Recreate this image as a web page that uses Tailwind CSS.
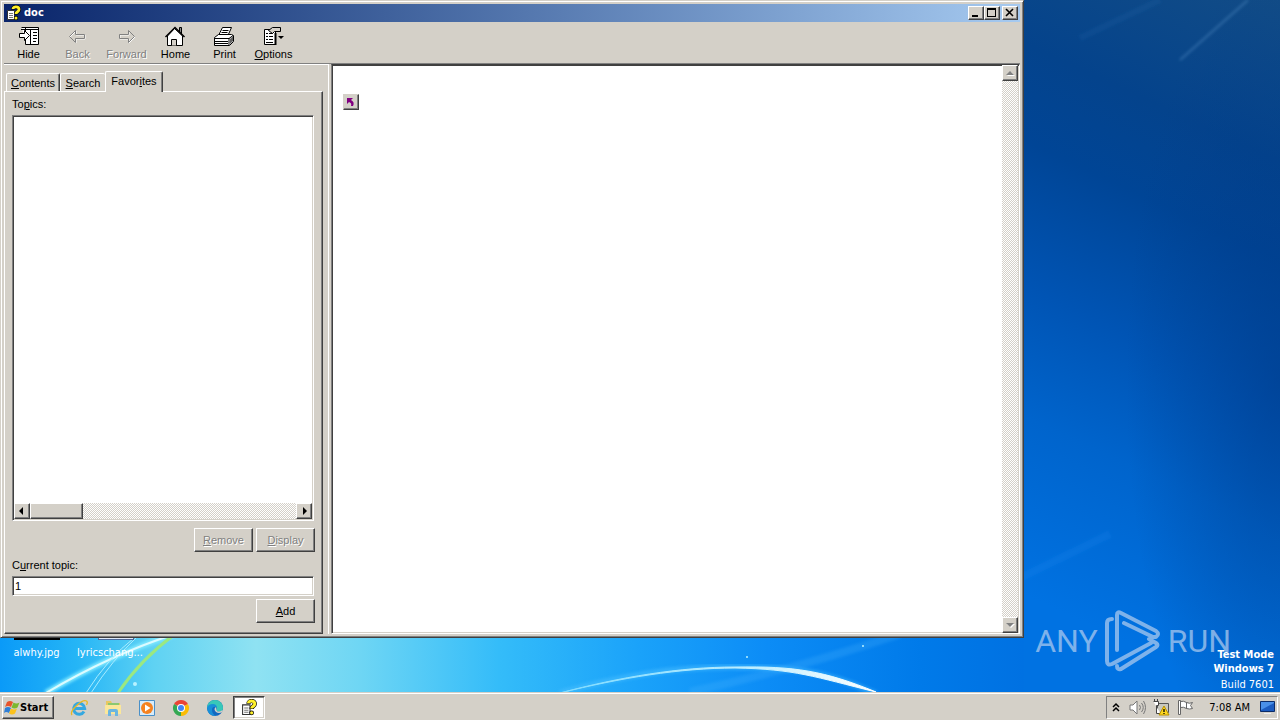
<!DOCTYPE html>
<html lang="en">
<head>
  <meta charset="UTF-8"/>
  <meta name="viewport" content="width=device-width, initial-scale=1.0"/>
  <title>doc</title>
  <script src="https://cdn.jsdelivr.net/npm/@tailwindcss/browser@4"></script>
</head>
<body class="flex h-screen flex-col overflow-hidden bg-[#0070e0] font-['Liberation_Sans',Arial,sans-serif] text-[11px] leading-[14px] text-black">

  <!-- Shared symbols -->
  <svg class="hidden">
    <symbol id="help" viewBox="0 0 16 16">
      <path d="M1.500 5.500h7v9h-7z" fill="#fff" stroke="#333"/>
      <path d="M3 8.500h4M3 10.500h4M3 12.500h4" stroke="#777"/>
      <path d="M7 4.500C7 1 13 1 13 4.500c0 2.500-3 2-3 5" fill="none" stroke="#000" stroke-width="4"/>
      <circle cx="10" cy="13" r="2.200" fill="#000"/>
      <path d="M7 4C7 1 13 1 13 4.500c0 2.500-3 2-3 4.500" fill="none" stroke="#fff02a" stroke-width="2.800"/>
      <circle cx="10" cy="13" r="1.500" fill="#fff02a"/>
    </symbol>
  </svg>

  <main class="relative min-h-0 flex-1 bg-[linear-gradient(90deg,#0a9af8_0%,#25b5f6_6%,#5fd2f3_12%,#8fe2f2_20%,#6fd6f4_28%,#34bcf9_39%,#1aa2fa_50%,#0c8cf6_60%,#007ae9_72%,#0070e1_81%,#0066d2_90%,#0050b0_100%)]">

    <!-- Wallpaper -->
    <div class="absolute inset-y-0 right-0 w-[20%] bg-[linear-gradient(205deg,#124c86_0%,#04438c_20%,#004596_32%,#0054b4_50%,#0064cc_66%,#0072e2_88%)]"></div>
    <svg class="absolute inset-0 size-full" viewBox="0 0 1280 692" preserveAspectRatio="xMidYMax slice" fill="none">
      <defs>
        <filter id="soft"><feGaussianBlur stdDeviation="1.500"/></filter>
        <radialGradient id="edge" cx="1" cy=".55" r=".6">
          <stop offset="0" stop-color="#003a88" stop-opacity=".55"/>
          <stop offset="1" stop-color="#003a88" stop-opacity="0"/>
        </radialGradient>
        <linearGradient id="arc" x1="560" y1="0" x2="880" y2="0" gradientUnits="userSpaceOnUse">
          <stop offset="0" stop-color="#7fdcff"/>
          <stop offset=".6" stop-color="#bfeeff"/>
          <stop offset="1" stop-color="#fff"/>
        </linearGradient>
      </defs>
      <path d="M1023 0h257v692h-257z" fill="url(#edge)"/>
      <path d="M1180 60 1248 0" stroke="#5f9ad0" stroke-opacity=".4" stroke-width="2" filter="url(#soft)"/>
      <path d="M1080 38 1160 0" stroke="#3a7cc0" stroke-opacity=".12" stroke-width="6" filter="url(#soft)"/>
      <path d="M1020 578 1110 534" stroke="#2f97f5" stroke-opacity=".14" stroke-width="8" filter="url(#soft)"/>
      <path d="M690 692Q800 668 900 634" stroke="#5cc0ff" stroke-opacity=".2" stroke-width="8" filter="url(#soft)"/>
      <path d="M46 693Q110 655 175 634" stroke="#7fe8ff" stroke-width="6" filter="url(#soft)"/>
      <path d="M46 693Q110 655 175 634" stroke="#dcfbff" stroke-width="2"/>
      <path d="M86 693Q108 658 134 638M91 693Q112 660 138 636" stroke="#a8ecff" stroke-width="1"/>
      <path d="M118 693Q140 660 175 634" stroke="#9be880" stroke-width="3"/>
      <path d="M560 693Q650 667 730 667C790 667 825 670 876 694" stroke="#4cc0ff" stroke-width="6" stroke-opacity=".5" filter="url(#soft)"/>
      <path d="M560 693C620 677 680 667 735 667 795 666 825 671 876 692 815 677 795 669 735 668 680 668 620 678 560 693Z" fill="url(#arc)" stroke="url(#arc)"/>
      <g fill="#b8f2ff"><circle cx="135" cy="684" r="2"/><circle cx="747" cy="657" r="1"/><circle cx="863" cy="646" r="1"/></g>
    </svg>

    <!-- Watermark -->
    <div class="absolute right-[49px] bottom-[20px] flex items-center gap-[7px] font-[Roboto,sans-serif] text-[32px] leading-[28px] text-[#a8c8ee]/75">
      <span>ANY</span>
      <svg class="h-[62px] w-[56px]" viewBox="0 0 56 62" fill="none" stroke="currentColor" stroke-width="4" stroke-linejoin="round" stroke-linecap="round">
        <path d="M7 9q-5 0-5 4v38q0 5 5 3l39-21M12 40V5q0-4 4-2l35 18q4 3 0 6h-3L19 13M44 29l7 4q3 2 0 4L16 59q-4 1-4-3"/>
      </svg>
      <span>RUN</span>
    </div>
    <div class="absolute right-[6px] bottom-0 text-right font-['DejaVu_Sans_Condensed','DejaVu_Sans',sans-serif] text-white">
      <p class="font-bold">Test Mode</p>
      <p class="font-bold">Windows 7</p>
      <p class="pt-[2px]">Build 7601</p>
    </div>

    <!-- Desktop icons -->
    <div class="absolute bottom-[32px] left-0 flex font-['DejaVu_Sans_Condensed','DejaVu_Sans',sans-serif] text-white">
      <div class="flex w-[73px] flex-col items-center">
        <div class="mb-[6px] h-[32px] w-[46px] bg-black"></div>
        <span>alwhy.jpg</span>
      </div>
      <div class="flex w-[74px] flex-col items-center">
        <div class="mb-[6px] ml-3 h-[32px] w-[36px] border border-[#4b6a9c] bg-[#dce8f8]"></div>
        <span>lyricschang...</span>
      </div>
    </div>

    <!-- Help viewer window -->
    <section class="absolute top-0 right-[256px] bottom-[54px] left-0 flex flex-col border border-t-[#d4d0c8] border-r-[#404040] border-b-[#404040] border-l-[#d4d0c8] bg-[#d4d0c8] p-[3px] shadow-[inset_1px_1px_0_#fff,inset_-1px_-1px_0_#808080]">
      <header class="flex h-[18px] shrink-0 items-center bg-linear-to-r from-[#0a246a] to-[#a6caf0] pr-[2px] pl-[2px]">
        <svg class="size-[16px]"><use href="#help"/></svg>
        <h1 class="ml-[2px] flex-1 font-['DejaVu_Sans_Condensed','DejaVu_Sans',sans-serif] font-bold text-white">doc</h1>
        <button aria-label="Minimize" class="h-[14px] w-[16px] border border-t-white border-r-[#404040] border-b-[#404040] border-l-white bg-[#d4d0c8] shadow-[inset_-1px_-1px_0_#808080]">
          <svg class="block h-[12px] w-[14px]"><path d="M3 8h6v2H3z"/></svg>
        </button>
        <button aria-label="Maximize" class="h-[14px] w-[16px] border border-t-white border-r-[#404040] border-b-[#404040] border-l-white bg-[#d4d0c8] shadow-[inset_-1px_-1px_0_#808080]">
          <svg class="block h-[12px] w-[14px]"><path d="M2 1h9v9H2zM3 3v6h7V3z" fill-rule="evenodd"/></svg>
        </button>
        <button aria-label="Close" class="ml-[2px] h-[14px] w-[16px] border border-t-white border-r-[#404040] border-b-[#404040] border-l-white bg-[#d4d0c8] shadow-[inset_-1px_-1px_0_#808080]">
          <svg class="block h-[12px] w-[14px]"><path d="m3 2 7 7M10 2 3 9" stroke="#000" stroke-width="1.600"/></svg>
        </button>
      </header>

      <nav class="flex h-[42px] shrink-0 border-b border-[#808080] pt-[4px]">
        <button class="flex w-[49px] flex-col items-center">
          <svg class="h-[21px] w-[24px]" viewBox="0 0 24 21">
            <path d="M4.500 1.500h17v17h-13v-5" fill="#fff" stroke="#000"/>
            <path d="M4 3.500h18M13.500 4v15M8.500 1v4" stroke="#000"/>
            <path d="M16 6.500h4M16 9.500h4M16 12.500h4M16 15.500h3" stroke="#000"/>
            <path d="M2.500 7.500h5v-3l5 5-5 5v-3h-5z" fill="#fff" stroke="#000"/>
          </svg>
          <span>Hide</span>
        </button>
        <button disabled class="flex w-[49px] flex-col items-center text-[#808080] [text-shadow:1px_1px_0_#fff]">
          <svg class="h-[21px] w-[24px]" viewBox="0 0 24 21" fill="none">
            <path d="M4 11l6-6v4h9v4h-9v4z" stroke="#fff"/>
            <path d="M3.500 10.500l6-6v4h9v4h-9v4z" stroke="#808080"/>
          </svg>
          <span>Back</span>
        </button>
        <button disabled class="flex w-[49px] flex-col items-center text-[#808080] [text-shadow:1px_1px_0_#fff]">
          <svg class="h-[21px] w-[24px]" viewBox="0 0 24 21" fill="none">
            <path d="M20 11l-6-6v4H5v4h9v4z" stroke="#fff"/>
            <path d="M19.500 10.500l-6-6v4h-9v4h9v4z" stroke="#808080"/>
          </svg>
          <span>Forward</span>
        </button>
        <button class="flex w-[49px] flex-col items-center">
          <svg class="h-[21px] w-[24px]" viewBox="0 0 24 21">
            <path d="M15.500 6V1.500h2V9" fill="#888" stroke="#000"/>
            <path d="M3.500 10v9.500h15V10l-8-7.500z" fill="#fff" stroke="#000"/>
            <path d="M1.500 11l9.500-9.500 9.500 9.500" fill="none" stroke="#000" stroke-width="1.500"/>
            <path d="M7.500 19.500v-6h5v6" fill="#d4d0c8" stroke="#000"/>
          </svg>
          <span>Home</span>
        </button>
        <button class="flex w-[49px] flex-col items-center">
          <svg class="h-[21px] w-[24px]" viewBox="0 0 24 21">
            <path d="M5.500 9.500l4-8h9l-4 9" fill="#fff" stroke="#000"/>
            <path d="M9.500 4.500h6M8.500 6.500h6M7.500 8.500h6" stroke="#000"/>
            <path d="M1.500 11.500l4-3h13l2 1v6l-4 4h-15z" fill="#fff" stroke="#000"/>
            <path d="M1 12.500h15l4-3M16 12v7" fill="none" stroke="#000"/>
            <path d="M2 15.500h13M2 17.500h13" stroke="#000"/>
            <path d="M17 13l3-3v5l-3 3z" fill="#606060"/>
          </svg>
          <span>Print</span>
        </button>
        <button class="flex w-[49px] flex-col items-center">
          <svg class="h-[21px] w-[24px]" viewBox="0 0 24 21">
            <path d="M2.500 3.500h11v15h-11z" fill="#fff" stroke="#000"/>
            <path d="M4 7.500h2M7 7.500h4M4 10.500h2M7 10.500h4M4 13.500h2M7 13.500h4M4 16.500h7" stroke="#000"/>
            <path d="M6.500 4.500l4-3h8v4h-6l-2 2z" fill="#d4d0c8" stroke="#000"/>
            <path d="M13.500 7v12" stroke="#000" stroke-width="2"/>
            <path d="M16 10h6l-3 3z"/>
          </svg>
          <span><u>O</u>ptions</span>
        </button>
      </nav>

      <div class="flex min-h-0 flex-1">
        <!-- Navigation pane -->
        <aside class="flex w-[325px] shrink-0 flex-col border-t border-r border-white pt-[6px] pr-[5px]">
          <div role="tablist" class="z-10 flex items-end pl-[2px]">
            <button role="tab" class="h-[18px] w-[54px] rounded-t-xs border border-b-0 border-t-white border-r-[#404040] border-l-white shadow-[inset_-1px_0_0_#808080]"><u>C</u>ontents</button>
            <button role="tab" class="h-[18px] w-[45px] rounded-t-xs border border-r-0 border-b-0 border-t-white border-l-white"><u>S</u>earch</button>
            <button role="tab" aria-selected="true" class="-mb-px h-[21px] w-[58px] rounded-t-xs border border-b-0 border-t-white border-r-[#404040] border-l-white bg-[#d4d0c8] pb-[3px] shadow-[inset_-1px_0_0_#808080]">Favor<u>i</u>tes</button>
          </div>
          <div role="tabpanel" class="flex min-h-0 flex-1 flex-col border border-t-white border-r-[#404040] border-b-[#404040] border-l-white px-[7px] pt-[5px] pb-[10px] shadow-[inset_-1px_-1px_0_#808080]">
            <h2 id="topics">To<u>p</u>ics:</h2>
            <div aria-labelledby="topics" class="mt-1 mr-px flex min-h-0 flex-1 flex-col border border-t-[#808080] border-r-white border-b-white border-l-[#808080] bg-white p-px shadow-[inset_1px_1px_0_#404040,inset_-1px_-1px_0_#d4d0c8]">
              <div class="flex-1"></div>
              <div class="flex h-[16px] bg-[repeating-conic-gradient(#fff_0_25%,#d4d0c8_0_50%)] bg-[length:2px_2px]">
                <button aria-label="Scroll left" class="w-[16px] border border-t-white border-r-[#404040] border-b-[#404040] border-l-white bg-[#d4d0c8] shadow-[inset_-1px_-1px_0_#808080]">
                  <svg class="block size-[14px]"><path d="M8 3v8L4 7z"/></svg>
                </button>
                <div class="w-[53px] border border-t-white border-r-[#404040] border-b-[#404040] border-l-white bg-[#d4d0c8] shadow-[inset_-1px_-1px_0_#808080]"></div>
                <button aria-label="Scroll right" class="ml-auto w-[16px] border border-t-white border-r-[#404040] border-b-[#404040] border-l-white bg-[#d4d0c8] shadow-[inset_-1px_-1px_0_#808080]">
                  <svg class="block size-[14px]"><path d="M6 3v8l4-4z"/></svg>
                </button>
              </div>
            </div>
            <div class="mt-[7px] flex justify-end gap-[3px]">
              <button disabled class="h-[24px] w-[59px] border border-t-white border-r-[#404040] border-b-[#404040] border-l-white text-[#808080] shadow-[inset_-1px_-1px_0_#808080] [text-shadow:1px_1px_0_#fff]"><u>R</u>emove</button>
              <button disabled class="h-[24px] w-[59px] border border-t-white border-r-[#404040] border-b-[#404040] border-l-white text-[#808080] shadow-[inset_-1px_-1px_0_#808080] [text-shadow:1px_1px_0_#fff]"><u>D</u>isplay</button>
            </div>
            <label for="topic" class="mt-[6px]">C<u>u</u>rrent topic:</label>
            <input id="topic" type="text" value="1" class="mt-1 mr-px h-[20px] border border-t-[#808080] border-r-white border-b-white border-l-[#808080] bg-white px-[2px] shadow-[inset_1px_1px_0_#404040,inset_-1px_-1px_0_#d4d0c8]"/>
            <button class="mt-[3px] h-[24px] w-[59px] shrink-0 self-end border border-t-white border-r-[#404040] border-b-[#404040] border-l-white shadow-[inset_-1px_-1px_0_#808080]"><u>A</u>dd</button>
          </div>
        </aside>

        <!-- Topic pane -->
        <div class="ml-[2px] flex min-w-0 flex-1 border border-t-[#404040] border-r-white border-b-white border-l-[#808080] bg-white pl-px shadow-[inset_1px_1px_0_#404040,inset_-1px_-1px_0_#d4d0c8]">
          <div class="flex-1 px-[10px] pt-[29px]">
            <button aria-label="Topic" class="size-[16px] border border-t-[#d4d0c8] border-r-[#404040] border-b-[#404040] border-l-[#d4d0c8] bg-[#d4d0c8] shadow-[inset_-1px_-1px_0_#808080]">
              <svg class="block size-[14px]" fill="#800080"><path d="M3 3h6L7 5q4 2 2 6H7q1-3-2-4L3 9z"/></svg>
            </button>
          </div>
          <div class="mr-px flex w-[16px] flex-col justify-between bg-[repeating-conic-gradient(#fff_0_25%,#d4d0c8_0_50%)] bg-[length:2px_2px]">
            <button aria-label="Scroll up" class="h-[16px] border border-t-white border-r-[#404040] border-b-[#404040] border-l-white bg-[#d4d0c8] shadow-[inset_-1px_-1px_0_#808080]">
              <svg class="block size-[14px]"><path d="M4 10h8L8 6z" fill="#fff"/><path d="M3 9h8L7 5z" fill="#808080"/></svg>
            </button>
            <button aria-label="Scroll down" class="h-[16px] border border-t-white border-r-[#404040] border-b-[#404040] border-l-white bg-[#d4d0c8] shadow-[inset_-1px_-1px_0_#808080]">
              <svg class="block size-[14px]"><path d="M4 6h8l-4 4z" fill="#fff"/><path d="M3 5h8L7 9z" fill="#808080"/></svg>
            </button>
          </div>
        </div>
      </div>
    </section>
  </main>

  <!-- Taskbar -->
  <footer class="flex h-[28px] shrink-0 border-t border-[#d4d0c8] bg-[#d4d0c8] px-[2px] pt-[3px] pb-[1px] font-['DejaVu_Sans_Condensed','DejaVu_Sans',sans-serif] shadow-[inset_0_1px_0_#fff]">
    <button class="flex w-[52px] items-center border border-t-white border-r-[#404040] border-b-[#404040] border-l-white pl-[1px] font-bold shadow-[inset_-1px_-1px_0_#808080]">
      <svg class="size-[16px] shrink-0" viewBox="0 0 16 16">
        <path d="M3 2q3-2 6 0L7 7Q4 5 1 7z" fill="#e8542a"/>
        <path d="M9.500 2.500q3 2 6 0l-2 5q-3 2-6 0z" fill="#7cb82f"/>
        <path d="M1 8q3-2 6 0l-2 5q-3-2-5 0z" fill="#2f7fd6"/>
        <path d="M7 8.500q3 2 6 0l-2 5q-3 2-6 0z" fill="#fcc21b"/>
      </svg>
      Start
    </button>
    <div class="ml-[16px] flex items-center gap-[16px]">
      <button aria-label="Internet Explorer">
        <svg class="size-[18px]" viewBox="0 0 18 18" fill="none">
          <path d="M14 12.500a5.500 5.500 0 1 1 .7-3H5" stroke="#35a8e0" stroke-width="3"/>
          <path d="M2 16C-1 12 12 0 16.500 2q1.500 1 0 4" stroke="#e8b820" stroke-width="1.300"/>
        </svg>
      </button>
      <button aria-label="Explorer">
        <svg class="size-[18px]" viewBox="0 0 18 18">
          <path d="M2 2h5l1 2h8v11H2z" fill="#e8c860"/>
          <path d="M4 4h11v4H4z" fill="#8cc870"/>
          <path d="M1 6h16v9H1z" fill="#fbe79a"/>
          <path d="M4 17v-5q0-2 2-2h6q2 0 2 2v5h-3v-4H7v4z" fill="#6cb6e0"/>
        </svg>
      </button>
      <button aria-label="Media Player">
        <svg class="size-[18px]" viewBox="0 0 18 18">
          <path d="M1.500 1.500h15v15h-15z" fill="#d8ecfa" stroke="#4a90c8"/>
          <circle cx="9" cy="9" r="6" fill="#f58220"/>
          <path d="M7 5.500l5.500 3.500L7 12.500z" fill="#fff"/>
        </svg>
      </button>
      <button aria-label="Chrome">
        <svg class="size-[18px]" viewBox="0 0 18 18">
          <path d="M9 9 2.070 5A8 8 0 0 1 15.930 5z" fill="#ea4335"/>
          <path d="M9 9l6.930-4A8 8 0 0 1 9 17z" fill="#fbbc05"/>
          <path d="M9 9v8A8 8 0 0 1 2.070 5z" fill="#34a853"/>
          <circle cx="9" cy="9" r="4" fill="#fff"/>
          <circle cx="9" cy="9" r="3" fill="#4285f4"/>
        </svg>
      </button>
      <button aria-label="Edge">
        <svg class="size-[18px]" viewBox="0 0 18 18">
          <circle cx="9" cy="9" r="8" fill="#1268c0"/>
          <path d="M1 9a8 8 0 0 1 16 0q0 3.500-4 3.500-3 0-2.500-2 1-3-2-4Q4 6 1 9z" fill="#38c8b8"/>
          <path d="M1 9q1-4 6-4 3 0 4 3-5-1-5 3 0 4 4 6-8 0-9-8z" fill="#1890d8"/>
          <path d="M10 8q-3 2 0 5 3 2 6 0l1-2q-6 3-6.500 0z" fill="#d4d0c8"/>
        </svg>
      </button>
    </div>
    <button aria-label="doc" class="ml-[9px] flex w-[32px] items-center justify-center border border-t-[#404040] border-r-white border-b-white border-l-[#404040] bg-white shadow-[inset_1px_1px_0_#808080,inset_-1px_-1px_0_#d4d0c8]">
      <svg class="size-[17px]"><use href="#help"/></svg>
    </button>
    <div class="ml-auto flex items-center border border-t-[#808080] border-r-white border-b-white border-l-[#808080] pr-[1px] pl-[5px]">
      <button aria-label="Show hidden icons"><svg class="h-[14px] w-[8px]" fill="none" stroke="#000" stroke-width="1.500"><path d="m1 6 3-3 3 3M1 10l3-3 3 3"/></svg></button>
      <svg class="ml-[9px] size-[17px]" viewBox="0 0 17 17" fill="#fff" stroke="#777">
        <path d="M1 6h3l4-4v13l-4-4H1z"/>
        <path d="M10.500 6q2 2.500 0 5M12.500 4q3.500 4.500 0 9M14.500 2q4 6.500 0 13" fill="none"/>
      </svg>
      <svg class="ml-[7px] size-[17px]" viewBox="0 0 17 17">
        <path d="M4.500 4.500h11v9h-11z" fill="#c8c8c0" stroke="#555"/>
        <path d="M.5 2.500h5v4h-2v8h4" fill="#fff" stroke="#444"/>
        <path d="M1.500 0v3M4.500 0v3" stroke="#444"/>
        <path d="M11 7l5 9H6z" fill="#ffd820" stroke="#b89000"/>
        <path d="M11 10v3M11 14v1" stroke="#000" stroke-width="1.300"/>
      </svg>
      <svg class="ml-[7px] size-[17px]" viewBox="0 0 17 17" fill="#fff" stroke="#666">
        <path d="M1.500 1.500h2v14h-2zM3.500 2.500q3-1 6 1v6q-3-2-6-1zM9.500 3.500q3 1.500 6 0l-2 3 2 3q-3 1-6 0z"/>
      </svg>
      <time class="ml-[15px]">7:08 AM</time>
      <button aria-label="Show desktop" class="ml-[9px]">
        <svg class="size-[17px]" viewBox="0 0 17 17"><path d="M1.500 2.500h14v10h-14z" fill="#1c5cc0" stroke="#0c2c68"/><path d="M2 11 15 4v-1H2z" fill="#4a90e8"/><path d="M5 14h7v1H5z" fill="#eee"/></svg>
      </button>
    </div>
  </footer>
</body>
</html>
